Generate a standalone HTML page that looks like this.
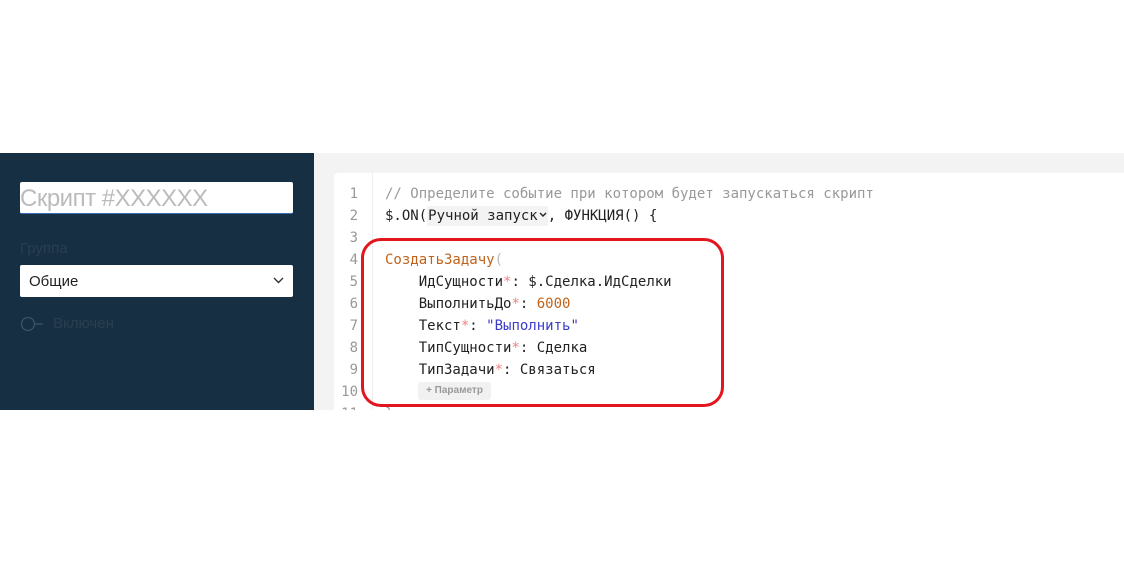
<!DOCTYPE html>
<html><head><meta charset="utf-8"><style>
html,body{margin:0;padding:0;background:#fff;width:1124px;height:564px;overflow:hidden;position:relative}
.side{position:absolute;left:0;top:153px;width:314px;height:257px;background:#172f43}
.gray{position:absolute;left:314px;top:153px;width:810px;height:257px;background:#f3f3f3;overflow:hidden}
.card{position:absolute;left:20px;top:20px;width:800px;height:300px;background:#fff;border-radius:4px}
.gut{position:absolute;left:38px;top:0;width:1px;height:300px;background:#eee}
.ln{position:absolute;left:0;width:24px;text-align:right;font:14px "DejaVu Sans Mono",monospace;color:#999}
.cl{position:absolute;left:51px;font:14px "DejaVu Sans Mono","Noto Sans CJK SC",monospace;color:#222;white-space:pre}
.inp{position:absolute;left:20px;top:182px;width:273px;height:31px;background:#fff;border-bottom:1px solid #3a6fb5;border-radius:2px;font:24px "Liberation Sans",sans-serif;color:#bbb;line-height:33px;letter-spacing:-0.5px}
.sel{position:absolute;left:20px;top:265px;width:273px;height:32px;background:#fff;border-radius:2px;font:15px "Liberation Sans",sans-serif;color:#222;line-height:33px}
.red{position:absolute;left:361px;top:238px;width:357px;height:163px;border:3px solid #e3151e;border-radius:20px}
.s{color:#f08080}
</style></head><body>
<div class="side"></div>
<div class="inp">Скрипт #XXXXXX</div>
<div style="position:absolute;left:20px;top:240px;font:15px 'Liberation Sans',sans-serif;color:#2a3e50">Группа</div>
<div class="sel"><span style="margin-left:9px">Общие</span><svg style="position:absolute;right:9px;top:12px" width="11" height="7" viewBox="0 0 11 7"><path d="M1 1l4.5 4.5L10 1" stroke="#333" stroke-width="1.4" fill="none"/></svg></div>
<svg style="position:absolute;left:20px;top:316px" width="26" height="16"><circle cx="8" cy="8" r="6.5" stroke="#3b5366" stroke-width="1.3" fill="none"/><path d="M15 8h8" stroke="#3b5366" stroke-width="1.3"/></svg>
<div style="position:absolute;left:53px;top:315px;font:15px 'Liberation Sans',sans-serif;color:#2a3e50">Включен</div>
<div class="gray"><div class="card"><div class="gut"></div>
<div class="ln" style="top:13px">1</div><div class="ln" style="top:35px">2</div><div class="ln" style="top:57px">3</div><div class="ln" style="top:79px">4</div><div class="ln" style="top:101px">5</div><div class="ln" style="top:123px">6</div><div class="ln" style="top:145px">7</div><div class="ln" style="top:167px">8</div><div class="ln" style="top:189px">9</div><div class="ln" style="top:211px">10</div><div class="ln" style="top:233px">11</div>
<div class="cl" style="top:13px;color:#999">// Определите событие при котором будет запускаться скрипт</div>
<div class="cl" style="top:35px">$.ON(<span style="background:#f3f3f3;padding:2px 1px">Ручной запуск<svg width="8" height="6" viewBox="0 0 8 6" style="margin-left:1px;vertical-align:2px"><path d="M1 1l3 3 3-3" stroke="#222" stroke-width="1.4" fill="none"/></svg></span>, ФУНКЦИЯ() {</div>
<div class="cl" style="top:79px;color:#c0621a">СоздатьЗадачу<span style="color:#bbb">(</span></div>
<div class="cl" style="top:101px">    ИдСущности<span class="s">*</span>: $.Сделка.ИдСделки</div>
<div class="cl" style="top:123px">    ВыполнитьДо<span class="s">*</span>: <span style="color:#c0621a">6000</span></div>
<div class="cl" style="top:145px">    Текст<span class="s">*</span>: <span style="color:#3b3bcc">"Выполнить"</span></div>
<div class="cl" style="top:167px">    ТипСущности<span class="s">*</span>: Сделка</div>
<div class="cl" style="top:189px">    ТипЗадачи<span class="s">*</span>: Связаться</div>
<div style="position:absolute;left:84px;top:209px;width:73px;height:18px;background:#f1f1f1;border-radius:3px;font:bold 10px 'Liberation Sans',sans-serif;color:#999;line-height:18px;text-align:center">+ Параметр</div>
<div class="cl" style="top:233px;color:#999">}</div>
</div></div>
<div class="red"></div>
</body></html>
